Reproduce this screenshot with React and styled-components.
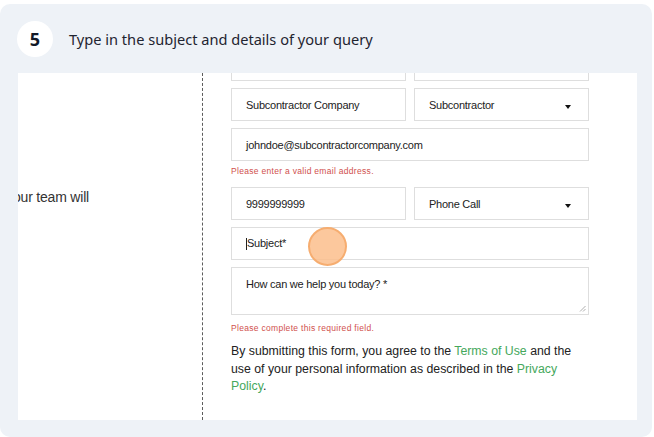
import React from 'react';
import styled, { createGlobalStyle } from 'styled-components';

const GlobalStyle = createGlobalStyle`
  body {
    margin: 0;
    background: #ffffff;
    font-family: "Noto Sans", "Liberation Sans", sans-serif;
  }
`;

const Card = styled.div`
  margin-top: 4px;
  width: 652px;
  height: 433px;
  background: #eef2f7;
  border-radius: 10px;
  overflow: hidden;
`;

const Header = styled.div`
  display: flex;
  align-items: center;
  gap: 16px;
  height: 69px;
  padding-left: 17px;
  box-sizing: border-box;
`;

const Badge = styled.div`
  width: 36px;
  height: 36px;
  border-radius: 50%;
  background: #ffffff;
  display: flex;
  align-items: center;
  justify-content: center;
  font-size: 18px;
  font-weight: 700;
  color: #111827;
`;

const Title = styled.div`
  font-size: 14.6px;
  color: #1f2430;
`;

const Shot = styled.div`
  margin-left: 18px;
  width: 619px;
  height: 347px;
  background: #ffffff;
  overflow: hidden;
  display: flex;
  font-family: "Liberation Sans", Arial, sans-serif;
`;

const Side = styled.div`
  width: 184px;
  flex-shrink: 0;
  overflow: hidden;
  padding-top: 115px;
  box-sizing: border-box;
`;

const SideText = styled.div`
  margin-left: -5px;
  font-size: 14px;
  line-height: 18px;
  color: #333333;
  white-space: nowrap;
  letter-spacing: -0.2px;
`;

const FormCol = styled.div`
  width: 415px;
  flex-shrink: 0;
  border-left: 1px dashed #5c5c5c;
  border-right: 1px dashed #5c5c5c;
  padding-left: 28px;
  box-sizing: content-box;
`;

const Form = styled.div`
  margin-top: -25px;
  width: 358px;
  display: flex;
  flex-direction: column;
  gap: 7px;
`;

const Row = styled.div`
  display: grid;
  grid-template-columns: 175px 175px;
  gap: 8px;
`;

const Field = styled.div`
  position: relative;
  height: ${(p) => p.$h || 33}px;
  box-sizing: border-box;
  border: 1px solid #dedede;
  background: #ffffff;
  padding: ${(p) => (p.$area ? '10px 15px 0 14px' : '0 15px 0 14px')};
  display: flex;
  align-items: ${(p) => (p.$area ? 'flex-start' : 'center')};
  justify-content: space-between;
  font-size: 11px;
  line-height: 12px;
  color: #222222;
  letter-spacing: -0.25px;
  white-space: nowrap;
`;

const Caret = styled.span`
  width: 0;
  height: 0;
  margin-top: 5px;
  margin-right: 2px;
  border-left: 3.5px solid transparent;
  border-right: 3.5px solid transparent;
  border-top: 4px solid #111111;
`;

const Cursor = styled.span`
  display: inline-block;
  width: 1px;
  height: 12px;
  background: #222222;
  vertical-align: middle;
`;

const Grip = styled.svg`
  position: absolute;
  right: 2px;
  bottom: 2px;
`;

const Error = styled.div`
  font-size: 8.5px;
  line-height: 10px;
  letter-spacing: 0.3px;
  color: #d0504d;
  margin: ${(p) => p.$m};
`;

const Legal = styled.p`
  margin: 3px 0 0;
  width: 350px;
  font-size: 12.3px;
  line-height: 17.5px;
  color: #222222;
`;

const Link = styled.span`
  color: #45a85c;
`;

const Click = styled.div`
  position: absolute;
  left: 76px;
  top: -1px;
  width: 39px;
  height: 39px;
  box-sizing: border-box;
  border-radius: 50%;
  background: rgba(251, 190, 140, 0.85);
  border: 2px solid #f6ad70;
`;

export default function App() {
  return (
    <>
      <GlobalStyle />
      <Card>
        <Header>
          <Badge>5</Badge>
          <Title>Type in the subject and details of your query</Title>
        </Header>
        <Shot>
          <Side>
            <SideText>our team will</SideText>
          </Side>
          <FormCol>
            <Form>
              <Row>
                <Field />
                <Field />
              </Row>
              <Row>
                <Field>Subcontractor Company</Field>
                <Field>
                  Subcontractor
                  <Caret />
                </Field>
              </Row>
              <Field>johndoe@subcontractorcompany.com</Field>
              <Error $m="-2px 0 4px">Please enter a valid email address.</Error>
              <Row>
                <Field>9999999999</Field>
                <Field>
                  Phone Call
                  <Caret />
                </Field>
              </Row>
              <Field>
                <span>
                  <Cursor />
                  Subject*
                </span>
                <Click />
              </Field>
              <Field $h={48} $area>
                How can we help you today? *
                <Grip width="7" height="7" viewBox="0 0 7 7">
                  <path d="M1 6.5 L6.5 1 M4 6.5 L6.5 4" stroke="#9a9a9a" strokeWidth="0.8" fill="none" />
                </Grip>
              </Field>
              <Error $m="1px 0 0">Please complete this required field.</Error>
              <Legal>
                By submitting this form, you agree to the <Link>Terms of Use</Link> and the use of your
                personal information as described in the <Link>Privacy Policy</Link>.
              </Legal>
            </Form>
          </FormCol>
        </Shot>
      </Card>
    </>
  );
}
